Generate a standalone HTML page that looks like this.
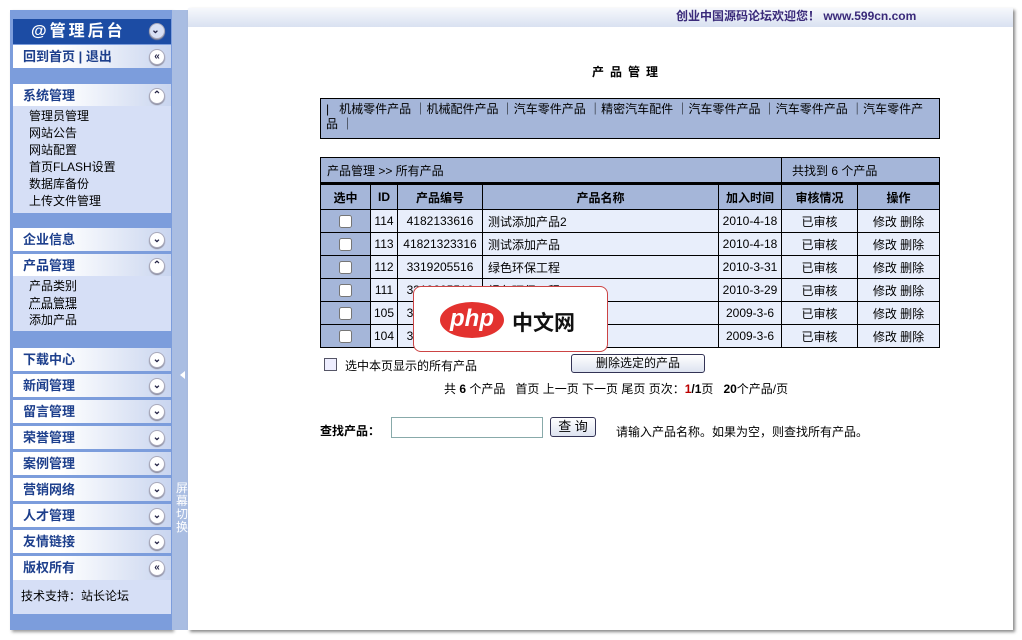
<!DOCTYPE html>
<html><head><meta charset="utf-8"><style>
*{margin:0;padding:0;box-sizing:border-box}
body{width:1022px;height:640px;background:#fff;font-family:"Liberation Sans","Noto Sans CJK SC",sans-serif;font-size:12px;color:#000;position:relative;overflow:hidden}
.a{position:absolute}
.side{left:10px;top:10px;width:162px;height:620px;background:#7c9ddc;box-shadow:2px 2px 3px #999}
.split{left:172px;top:10px;width:16px;height:620px;background:#a9bde2}
.main{left:188px;top:8px;width:825px;height:622px;background:#fff;box-shadow:2px 2px 3px #888}
.topbar{left:188px;top:8px;width:825px;height:19px;background:linear-gradient(#f6f8fc,#d9e1f1)}
.hd{left:13px;width:158px;height:24px;background:linear-gradient(90deg,#fff 30%,#c9d5ef);border-bottom:1px solid #7c9ddc;font-weight:bold;color:#1d3f8c;font-size:13px;padding-left:10px;line-height:24px}
.ic{position:absolute;right:6px;top:4px;width:16px;height:16px;border-radius:50%;background:#fff;border:1px solid #aab;box-shadow:0 1px 1px #889;font-size:10px;line-height:13px;text-align:center;color:#224;font-weight:bold}
.items{left:13px;width:158px;background:#d6dff6;padding-left:16px;line-height:17px;font-size:12px}
table{border-collapse:collapse}
td{border:1px solid #000;height:23px;text-align:center;font-size:12px}
input{vertical-align:middle}
</style></head><body>
<div class="a side"></div>
<div class="a split"></div>
<div class="a main"></div>
<div class="a topbar"></div>
<div class="a" style="left:676px;top:7px;color:#3a2a7a;font-weight:bold;font-size:12px">创业中国源码论坛欢迎您！ www.599cn.com</div>

<div class="a" style="left:13px;top:19px;width:158px;height:25px;background:#1c4ca4;color:#fff;font-weight:bold;font-size:16px;line-height:25px;padding-left:18px;letter-spacing:3px">@管理后台<span class="ic" style="background:#d8e0f4;right:6px">⌄</span></div>
<div class="a hd" style="top:45px;height:24px">回到首页 | 退出<span class="ic">«</span></div>
<div class="a hd" style="top:84px;height:22px;border:0">系统管理<span class="ic">⌃</span></div>
<div class="a items" style="top:106px;height:107px;padding-top:2px">管理员管理<br>网站公告<br>网站配置<br>首页FLASH设置<br>数据库备份<br>上传文件管理</div>
<div class="a hd" style="top:228px">企业信息<span class="ic">⌄</span></div>
<div class="a hd" style="top:254px;height:22px;border:0">产品管理<span class="ic">⌃</span></div>
<div class="a items" style="top:276px;height:55px;padding-top:2px">产品类别<br><u style="text-decoration-style:dotted">产品管理</u><br>添加产品</div>
<div class="a hd" style="top:348px">下载中心<span class="ic">⌄</span></div>
<div class="a hd" style="top:374px">新闻管理<span class="ic">⌄</span></div>
<div class="a hd" style="top:400px">留言管理<span class="ic">⌄</span></div>
<div class="a hd" style="top:426px">荣誉管理<span class="ic">⌄</span></div>
<div class="a hd" style="top:452px">案例管理<span class="ic">⌄</span></div>
<div class="a hd" style="top:478px">营销网络<span class="ic">⌄</span></div>
<div class="a hd" style="top:504px">人才管理<span class="ic">⌄</span></div>
<div class="a hd" style="top:530px">友情链接<span class="ic">⌄</span></div>
<div class="a hd" style="top:556px;border:0">版权所有<span class="ic">«</span></div>
<div class="a items" style="top:580px;height:34px;padding-left:8px;line-height:32px">技术支持：站长论坛</div>
<div class="a" style="left:180px;top:371px;width:0;height:0;border-top:4px solid transparent;border-bottom:4px solid transparent;border-right:5px solid #fff"></div>
<div class="a" style="left:176px;top:482px;width:14px;color:#fff;font-size:12px;line-height:13px">屏幕切换</div>

<div class="a" style="left:592px;top:63px;font-weight:bold;letter-spacing:6px">产品管理</div>
<div class="a" style="left:320px;top:98px;width:620px;height:41px;background:#a5b6d9;border:1px solid #000;padding:3px 5px;line-height:15px">|&nbsp;&nbsp; 机械零件产品 ｜机械配件产品 ｜汽车零件产品 ｜精密汽车配件 ｜汽车零件产品 ｜汽车零件产品 ｜汽车零件产品 ｜</div>

<table class="a" style="left:320px;top:157px;width:620px">
<tr style="background:#a5b6d9"><td colspan="5" style="text-align:left;padding-left:6px;border-bottom:3px solid #000;height:26px">产品管理 &gt;&gt; 所有产品</td><td colspan="2" style="text-align:left;padding-left:10px;border-bottom:3px solid #000">共找到 6 个产品</td></tr>
<tr style="background:#a5b6d9;font-weight:bold"><td style="width:50px;height:26px;font-weight:bold">选中</td><td style="width:27px;font-weight:bold">ID</td><td style="width:85px;font-weight:bold">产品编号</td><td style="width:236px;font-weight:bold">产品名称</td><td style="width:63px;font-weight:bold">加入时间</td><td style="width:76px;font-weight:bold">审核情况</td><td style="font-weight:bold">操作</td></tr>
<tr style="background:#e8eefb"><td style="background:#a5b6d9"><input type="checkbox" style="width:13px;height:13px"></td><td>114</td><td>4182133616</td><td style="text-align:left;padding-left:5px">测试添加产品2</td><td>2010-4-18</td><td>已审核</td><td>修改 删除</td></tr>
<tr style="background:#e8eefb"><td style="background:#a5b6d9"><input type="checkbox" style="width:13px;height:13px"></td><td>113</td><td>41821323316</td><td style="text-align:left;padding-left:5px">测试添加产品</td><td>2010-4-18</td><td>已审核</td><td>修改 删除</td></tr>
<tr style="background:#e8eefb"><td style="background:#a5b6d9"><input type="checkbox" style="width:13px;height:13px"></td><td>112</td><td>3319205516</td><td style="text-align:left;padding-left:5px">绿色环保工程</td><td>2010-3-31</td><td>已审核</td><td>修改 删除</td></tr>
<tr style="background:#e8eefb"><td style="background:#a5b6d9"><input type="checkbox" style="width:13px;height:13px"></td><td>111</td><td>3319205516</td><td style="text-align:left;padding-left:5px">绿色环保工程</td><td>2010-3-29</td><td>已审核</td><td>修改 删除</td></tr>
<tr style="background:#e8eefb"><td style="background:#a5b6d9"><input type="checkbox" style="width:13px;height:13px"></td><td>105</td><td>3319205516</td><td style="text-align:left;padding-left:5px">产品</td><td>2009-3-6</td><td>已审核</td><td>修改 删除</td></tr>
<tr style="background:#e8eefb"><td style="background:#a5b6d9"><input type="checkbox" style="width:13px;height:13px"></td><td>104</td><td>3319205516</td><td style="text-align:left;padding-left:5px">产品</td><td>2009-3-6</td><td>已审核</td><td>修改 删除</td></tr>
</table>

<div class="a" style="left:413px;top:286px;width:195px;height:66px;background:#fff;border:1px solid #c44;border-radius:8px"></div>
<div class="a" style="left:440px;top:302px;width:64px;height:36px;border-radius:50%;background:#e3322f;color:#fff;font-weight:bold;font-style:italic;font-size:24px;line-height:34px;text-align:center">php</div>
<div class="a" style="left:512px;top:307px;font-size:21px;font-weight:bold;color:#111">中文网</div>

<div class="a" style="left:324px;top:358px;width:13px;height:13px;border:1px solid #556;background:#eef"></div>
<div class="a" style="left:345px;top:357px">选中本页显示的所有产品</div>
<div class="a" style="left:571px;top:354px;width:134px;height:19px;border:1px solid #335;border-radius:3px;background:linear-gradient(#fff,#dde3f0);text-align:center;line-height:17px">删除选定的产品</div>
<div class="a" style="left:444px;top:380px">共 <b>6</b> 个产品&nbsp;&nbsp; 首页 上一页 下一页 尾页 页次：<b style="color:#b00">1</b><b>/1</b>页&nbsp;&nbsp; <b>20</b>个产品/页</div>
<div class="a" style="left:320px;top:422px;font-weight:bold">查找产品：</div>
<div class="a" style="left:391px;top:417px;width:152px;height:21px;border:1px solid #8aa;background:#fff"></div>
<div class="a" style="left:550px;top:417px;width:46px;height:20px;border:1px solid #335;border-radius:3px;background:linear-gradient(#fff,#dde3f0);text-align:center;line-height:17px;font-size:13px">查 询</div>
<div class="a" style="left:616px;top:423px">请输入产品名称。如果为空，则查找所有产品。</div>
</body></html>
